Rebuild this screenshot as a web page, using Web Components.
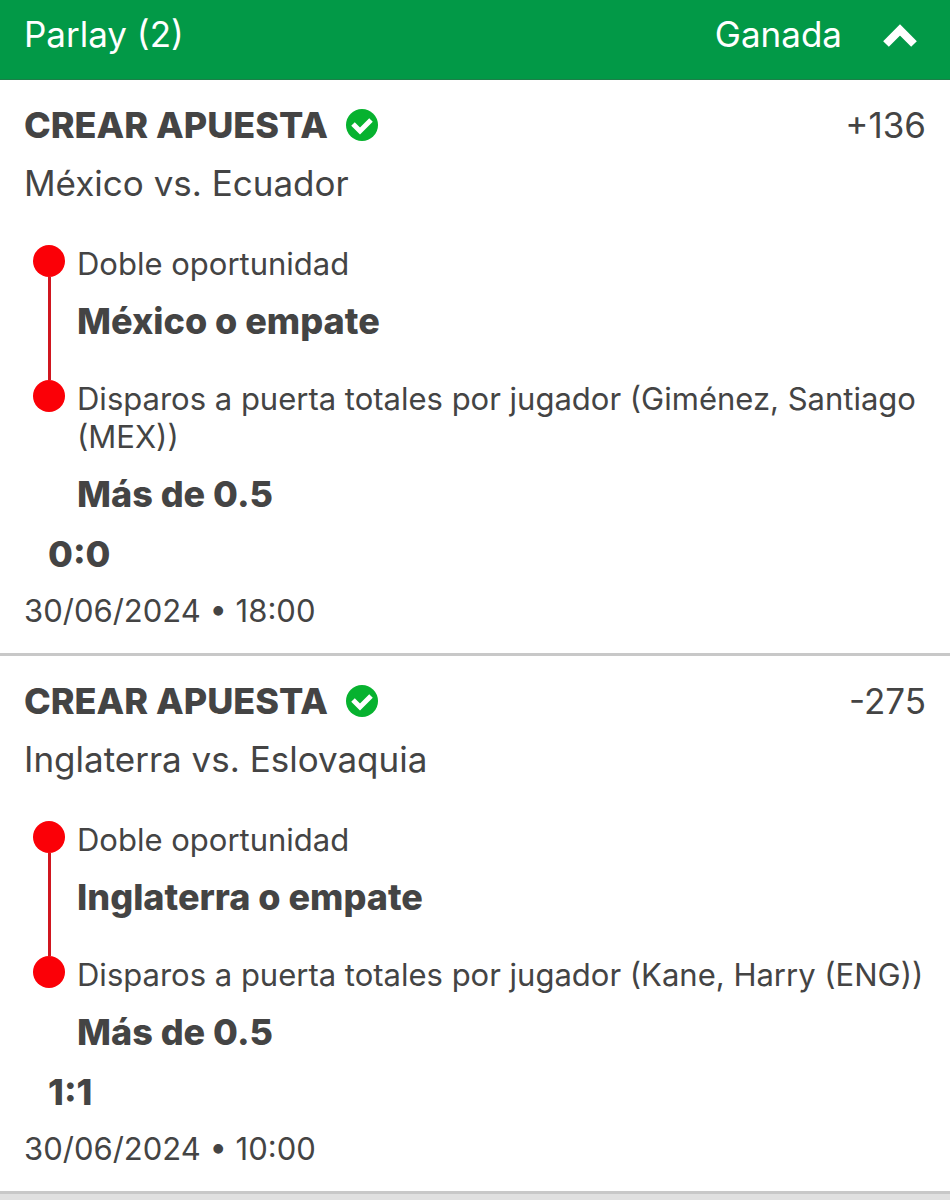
<!DOCTYPE html>
<html lang="es">
<head>
<meta charset="utf-8">
<meta name="viewport" content="width=device-width, initial-scale=1">
<title>Parlay (2)</title>
<style>
    body {
        margin: 0;
        background: #e0e0e0;
        color: #444;
        font: 35px/38px Inter, "Liberation Sans", sans-serif;
    }
</style>
</head>
<body>
<bet-slip status="Ganada">
    <span slot="title">Parlay (2)</span>
    <bet-event odds="+136" score="0:0" date="30/06/2024 • 18:00">
        <span slot="match">México vs. Ecuador</span>
        <bet-leg pick="México o empate">Doble oportunidad</bet-leg>
        <bet-leg pick="Más de 0.5" last>Disparos a puerta totales por jugador (Giménez, Santiago (MEX))</bet-leg>
    </bet-event>
    <bet-event odds="-275" score="1:1" date="30/06/2024 • 10:00">
        <span slot="match">Inglaterra vs. Eslovaquia</span>
        <bet-leg pick="Inglaterra o empate">Doble oportunidad</bet-leg>
        <bet-leg pick="Más de 0.5" last>Disparos a puerta totales por jugador (Kane, Harry (ENG))</bet-leg>
    </bet-event>
</bet-slip>

<script>
class BetSlip extends HTMLElement {

    connectedCallback() {
        this.attachShadow({ mode: 'open' });
        this.shadowRoot.innerHTML = `
            <style>
                :host {
                    display: block;
                }
                button {
                    display: flex;
                    align-items: center;
                    box-sizing: border-box;
                    width: 100%;
                    margin: 0;
                    padding: 15px 32px 26px 24px;
                    border: 0;
                    border-bottom: 1px solid #1c7f48;
                    background: #029947;
                    color: #fff;
                    font: inherit;
                    text-align: left;
                    cursor: pointer;
                }
                .title {
                    flex: 1;
                }
                svg {
                    width: 36px;
                    height: 28px;
                    margin-left: 40px;
                }
                button[aria-expanded="false"] svg {
                    transform: rotate(180deg);
                }
            </style>
            <button type="button" aria-expanded="true" aria-controls="events">
                <span class="title"><slot name="title"></slot></span>
                <span>${this.getAttribute("status")}</span>
                <svg viewBox="0 0 36 28" aria-hidden="true">
                    <path d="M4 24L18 10L32 24" fill="none" stroke="#fff" stroke-width="8"/>
                </svg>
            </button>
            <div id="events"><slot></slot></div>
        `;

        const button = this.shadowRoot.querySelector("button");
        const events = this.shadowRoot.querySelector("#events");
        button.onclick = () => {
            events.hidden = !events.hidden;
            button.setAttribute("aria-expanded", !events.hidden);
        };
    }
}

class BetEvent extends HTMLElement {

    connectedCallback() {
        this.attachShadow({ mode: 'open' });
        this.shadowRoot.innerHTML = `
            <style>
                :host {
                    display: block;
                    padding: 26px 24px 23px;
                    border-bottom: 3px solid #c8c8c8;
                    background: #fff;
                }
                .head {
                    display: flex;
                    align-items: center;
                    gap: 18px;
                }
                h2 {
                    margin: 0;
                    font: inherit;
                    font-size: 36px;
                    font-weight: 800;
                }
                svg {
                    width: 33px;
                    height: 33px;
                }
                .odds {
                    margin-left: auto;
                }
                .match {
                    margin-top: 20px;
                }
                .legs {
                    margin-top: 43px;
                    padding-left: 9px;
                }
                .score {
                    margin-top: 22px;
                    padding-left: 24px;
                    font-size: 36px;
                    font-weight: 800;
                }
                .date {
                    margin-top: 19px;
                    font-size: 31px;
                }
            </style>
            <div class="head">
                <h2>CREAR APUESTA</h2>
                <svg viewBox="0 0 33 33" role="img" aria-label="Ganada">
                    <circle cx="16" cy="16" r="16" fill="#07b22f"/>
                    <path d="M7 15L14 22L25 11" fill="none" stroke="#fff" stroke-width="5"/>
                </svg>
                <span class="odds">${this.getAttribute("odds")}</span>
            </div>
            <div class="match"><slot name="match"></slot></div>
            <div class="legs"><slot></slot></div>
            <div class="score">${this.getAttribute("score")}</div>
            <div class="date">${this.getAttribute("date")}</div>
        `;
    }
}

class BetLeg extends HTMLElement {

    connectedCallback() {
        this.attachShadow({ mode: 'open' });
        this.shadowRoot.innerHTML = `
            <style>
                :host {
                    display: flex;
                    gap: 12px;
                }
                .marker {
                    display: flex;
                    flex-direction: column;
                    align-items: center;
                    flex: none;
                    width: 32px;
                }
                .dot {
                    width: 32px;
                    height: 32px;
                    border-radius: 50%;
                    background: #fb0007;
                }
                .line {
                    flex: 1;
                    width: 3px;
                    background: #d0161f;
                }
                .text {
                    padding-bottom: 40px;
                }
                :host([last]) .line {
                    display: none;
                }
                :host([last]) .text {
                    padding-bottom: 0;
                }
                .market {
                    font-size: 31px;
                }
                .pick {
                    margin-top: 19px;
                    font-size: 36px;
                    font-weight: 800;
                }
            </style>
            <div class="marker">
                <div class="dot"></div>
                <div class="line"></div>
            </div>
            <div class="text">
                <div class="market"><slot></slot></div>
                <div class="pick">${this.getAttribute("pick")}</div>
            </div>
        `;
    }
}

window.customElements.define('bet-slip', BetSlip);
window.customElements.define('bet-event', BetEvent);
window.customElements.define('bet-leg', BetLeg);
</script>
</body>
</html>
